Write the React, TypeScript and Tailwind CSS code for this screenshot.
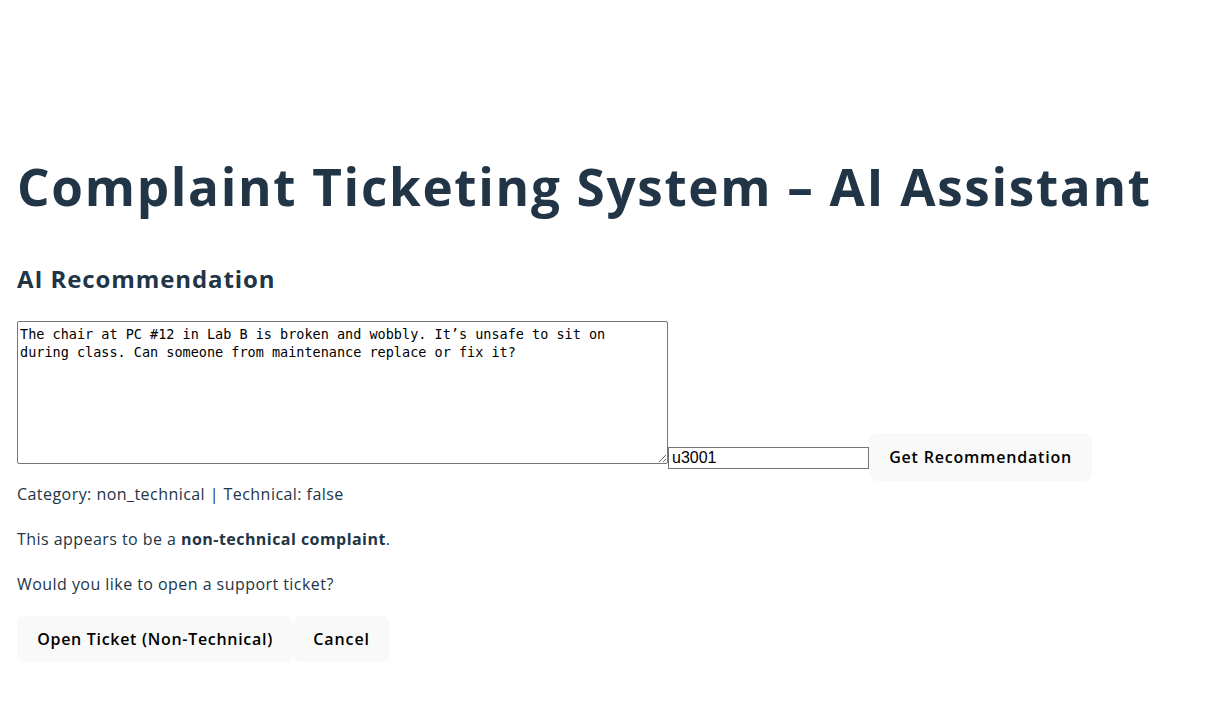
import React, { useState } from 'react';

const App = () => {
  const [text, setText] = useState(
    "The chair at PC #12 in Lab B is broken and wobbly. It’s unsafe to sit on during class. Can someone from maintenance replace or fix it?"
  );
  const [userId, setUserId] = useState("u3001");

  return (
    <div className="min-h-screen bg-white text-[#213547] font-['Open_Sans',sans-serif] px-[17px] pt-[158px]">
      <h1 className="text-[51.2px] font-bold leading-[1.1] tracking-[1.7px] whitespace-nowrap">
        Complaint Ticketing System – AI Assistant
      </h1>
      <h2 className="mt-[47px] text-[24px] font-bold leading-[36px] tracking-[0.9px]">AI Recommendation</h2>

      <div className="mt-[24px] flex items-end">
        <textarea
          value={text}
          onChange={(e) => setText(e.target.value)}
          className="mb-[17px] w-[651px] h-[143px] border border-[#767676] rounded-[2px] pl-[2px] pr-[10px] pt-[3px] font-['DejaVu_Sans_Mono',monospace] text-[13.5px] leading-[18px] text-black resize"
        />
        <input
          type="text"
          value={userId}
          onChange={(e) => setUserId(e.target.value)}
          className="mb-[12px] w-[201px] h-[22px] border border-[#767676] px-[3px] font-['Liberation_Sans',sans-serif] text-[16px] leading-[18px] text-black"
        />
        <button
          type="button"
          className="h-[48px] px-[19.2px] rounded-[8px] bg-[#f9f9f9] text-black font-semibold text-[16px] tracking-[0.8px] border border-transparent"
        >
          Get Recommendation
        </button>
      </div>

      <div className="text-[16px] leading-[24px] tracking-[0.45px]">
        <p className="mt-[1px]">Category: non_technical | Technical: false</p>
        <p className="mt-[21px]">
          This appears to be a <strong className="font-bold">non-technical complaint</strong>.
        </p>
        <p className="mt-[21px]">Would you like to open a support ticket?</p>
      </div>

      <div className="mt-[20px] flex">
        <button
          type="button"
          className="h-[46px] px-[19.2px] rounded-[8px] bg-[#f9f9f9] text-black font-semibold text-[16px] tracking-[0.7px] border border-transparent"
        >
          Open Ticket (Non-Technical)
        </button>
        <button
          type="button"
          className="h-[46px] px-[19.2px] rounded-[8px] bg-[#f9f9f9] text-black font-semibold text-[16px] tracking-[0.9px] border border-transparent"
        >
          Cancel
        </button>
      </div>
    </div>
  );
};

export default App;
